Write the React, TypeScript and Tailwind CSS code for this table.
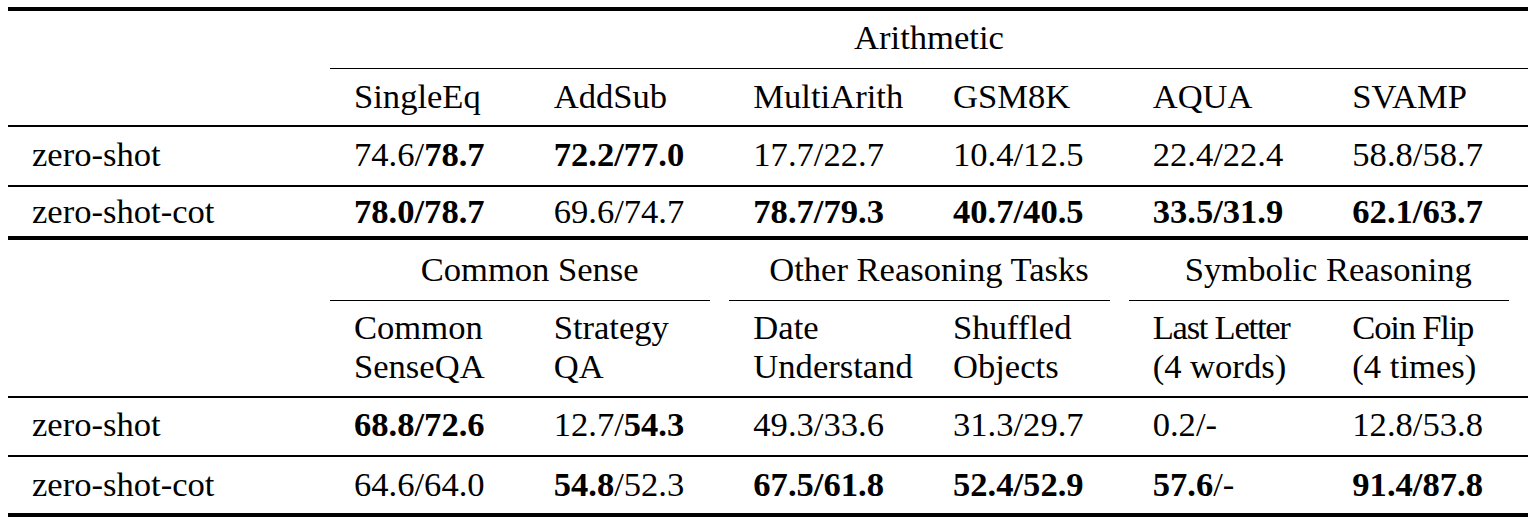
import React from "react";

type Cell = React.ReactNode;

const B = ({ children }: { children: React.ReactNode }) => (
  <span className="font-bold">{children}</span>
);

const rowGrid = "grid grid-cols-[322px_repeat(6,minmax(0,1fr))]";

function DataRow({ label, cells, h }: { label: string; cells: Cell[]; h: string }) {
  return (
    <div className={`${rowGrid} ${h} items-center`}>
      <div className="pl-[24px] whitespace-nowrap">{label}</div>
      {cells.map((c, i) => (
        <div key={i} className="pl-[24px] whitespace-nowrap">
          {c}
        </div>
      ))}
    </div>
  );
}

function HeaderRow({ cells, h }: { cells: Cell[]; h: string }) {
  return (
    <div className={`${rowGrid} ${h} items-center`}>
      <div />
      {cells.map((c, i) => (
        <div key={i} className="pl-[24px] whitespace-nowrap">
          {c}
        </div>
      ))}
    </div>
  );
}

const ThickRule = () => <div className="h-[4px] bg-black" />;
const MidRule = () => <div className="h-[2px] bg-black" />;

export default function App() {
  return (
    <div className="w-[1530px] h-[522px] bg-white overflow-hidden">
      <div className="ml-[8px] mt-[7px] w-[1520px] font-[family-name:'Liberation_Serif','Times_New_Roman',serif] text-[34.6px] leading-[39px] text-black">
        <ThickRule />
        {/* Arithmetic group header */}
        <div className={`${rowGrid} h-[57px] pb-[4px] items-center`}>
          <div />
          <div className="col-span-6 text-center whitespace-nowrap">Arithmetic</div>
        </div>
        <div className={rowGrid}>
          <div />
          <div className="col-span-6 h-px bg-black" />
        </div>
        <HeaderRow
          h="h-[56px] pb-[2px]"
          cells={["SingleEq", "AddSub", "MultiArith", "GSM8K", "AQUA", "SVAMP"]}
        />
        <MidRule />
        <DataRow
          h="h-[58px] pb-[4px]"
          label="zero-shot"
          cells={[
            <>74.6/<B>78.7</B></>,
            <B>72.2/77.0</B>,
            "17.7/22.7",
            "10.4/12.5",
            "22.4/22.4",
            "58.8/58.7",
          ]}
        />
        <MidRule />
        <DataRow
          h="h-[49px]"
          label="zero-shot-cot"
          cells={[
            <B>78.0/78.7</B>,
            "69.6/74.7",
            <B>78.7/79.3</B>,
            <B>40.7/40.5</B>,
            <B>33.5/31.9</B>,
            <B>62.1/63.7</B>,
          ]}
        />
        <ThickRule />
        {/* Second group headers */}
        <div className={`${rowGrid} h-[60px] pb-[2px] items-center`}>
          <div />
          <div className="col-span-2 text-center whitespace-nowrap">Common Sense</div>
          <div className="col-span-2 text-center whitespace-nowrap">Other Reasoning Tasks</div>
          <div className="col-span-2 text-center whitespace-nowrap">Symbolic Reasoning</div>
        </div>
        <div className={rowGrid}>
          <div />
          <div className="col-span-2 mr-[19px] h-px bg-black" />
          <div className="col-span-2 mr-[19px] h-px bg-black" />
          <div className="col-span-2 mr-[19px] h-px bg-black" />
        </div>
        <HeaderRow
          h="h-[95px] pb-[4px]"
          cells={[
            <>Common<br />SenseQA</>,
            <>Strategy<br />QA</>,
            <>Date<br />Understand</>,
            <>Shuffled<br />Objects</>,
            <><span className="tracking-[-1.25px]">Last Letter</span><br />(4 words)</>,
            <><span className="tracking-[-1.2px]">Coin Flip</span><br />(4 times)</>,
          ]}
        />
        <MidRule />
        <DataRow
          h="h-[57px] pb-[4px]"
          label="zero-shot"
          cells={[
            <B>68.8/72.6</B>,
            <>12.7/<B>54.3</B></>,
            "49.3/33.6",
            "31.3/29.7",
            "0.2/-",
            "12.8/53.8",
          ]}
        />
        <MidRule />
        <DataRow
          h="h-[56px] pb-[2px]"
          label="zero-shot-cot"
          cells={[
            "64.6/64.0",
            <><B>54.8</B>/52.3</>,
            <B>67.5/61.8</B>,
            <B>52.4/52.9</B>,
            <><B>57.6</B>/-</>,
            <B>91.4/87.8</B>,
          ]}
        />
        <ThickRule />
      </div>
    </div>
  );
}
